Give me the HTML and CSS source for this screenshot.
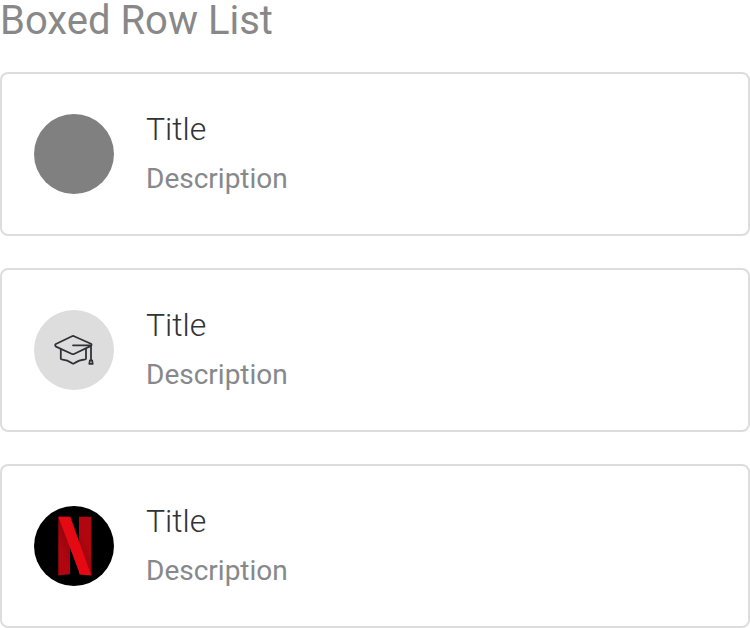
FILE: index.html
```html
<!DOCTYPE html>
<html lang="en">
<head>
<meta charset="utf-8">
<title>Boxed Row List</title>
<link rel="stylesheet" href="styles.css">
</head>
<body>
<h1 class="heading">Boxed Row List</h1>
<ul class="list">
  <li class="row">
    <span class="asset asset-plain"></span>
    <div class="content"><p class="title">Title</p><p class="description">Description</p></div>
  </li>
  <li class="row">
    <span class="asset asset-icon">
      <svg width="40" height="40" viewBox="0 0 40 40" fill="none" stroke="#313235" stroke-width="1.8" stroke-linejoin="round" stroke-linecap="round">
        <path d="M1.9 14 18 6.3Q19 5.8 20 6.2L36.9 13.8Q38.2 14.8 36.9 15.9L20 24Q19 24.4 18 24L2 16.6Q.3 15.3 1.9 14Z"/>
        <path d="M19 15.3H37V29.5"/>
        <path d="M6.8 19.5V28.6Q6.8 29.3 7.6 29.4C12 29.8 15.5 31.3 18.2 33.3Q19.2 34 20.2 33.3C23 31.3 26.5 29.8 31.2 29.4Q32 29.3 32 28.6V19.2"/>
        <path d="M35.9 30.4H38.1L38.7 33.8H35.3Z"/>
      </svg>
    </span>
    <div class="content"><p class="title">Title</p><p class="description">Description</p></div>
  </li>
  <li class="row">
    <span class="asset asset-image">
      <svg width="80" height="80" viewBox="0 0 80 80">
        <defs>
          <linearGradient id="fold" gradientUnits="userSpaceOnUse" x1="28" y1="46" x2="37" y2="42">
            <stop offset="0" stop-color="#b1060f"/>
            <stop offset="1" stop-color="#98050d"/>
          </linearGradient>
          <linearGradient id="fold-right" gradientUnits="userSpaceOnUse" x1="44" y1="42" x2="53" y2="38">
            <stop offset="0" stop-color="#98050d"/>
            <stop offset="1" stop-color="#b1060f"/>
          </linearGradient>
        </defs>
        <path fill="url(#fold)" d="M24.3 10.8H36V68.3Q30 68.6 24.3 69.4Z"/>
        <path fill="url(#fold-right)" d="M45 10.8H57.3V69.3L45 68.3Z"/>
        <path fill="#e50914" d="M24.3 10.8H36.3L57.3 69.5Q51.5 68.7 46 68.4Z"/>
      </svg>
    </span>
    <div class="content"><p class="title">Title</p><p class="description">Description</p></div>
  </li>
</ul>
</body>
</html>
```
FILE: styles.css
```css
* { box-sizing: border-box; margin: 0; padding: 0; }
body { background: #fff; font-family: Roboto, sans-serif; -webkit-font-smoothing: antialiased; }
.heading { height: 72px; font-size: 40px; line-height: 42px; font-weight: 400; color: #888; }
.list { display: flex; flex-direction: column; gap: 32px; list-style: none; }
.row { display: flex; gap: 32px; height: 164px; padding: 32px; border: 2px solid #ddd; border-radius: 8px; }
.asset { width: 80px; height: 80px; margin-top: 8px; border-radius: 50%; overflow: hidden; display: flex; align-items: center; justify-content: center; }
.asset-plain { background: gray; }
.asset-icon { background: #ddd; }
.asset-image { background: #000; }
.title { font-size: 32px; line-height: 46px; font-weight: 300; color: #313235; }
.description { margin-top: 7px; font-size: 28px; line-height: 40px; color: #86888c; }
```
